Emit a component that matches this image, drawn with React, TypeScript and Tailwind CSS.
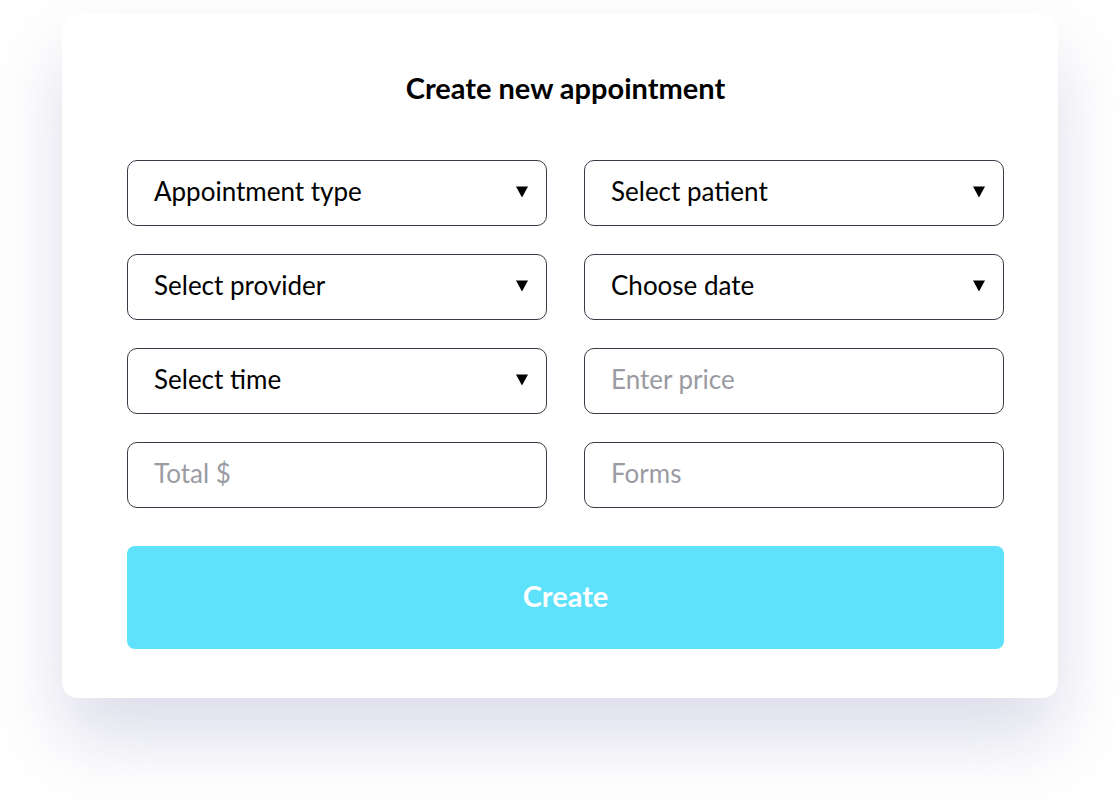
import React from "react";

const selects = [
  "Appointment type",
  "Select patient",
  "Select provider",
  "Choose date",
  "Select time",
];

function Caret() {
  return (
    <svg width="12" height="12" viewBox="0 0 12 12" className="mb-[3px] shrink-0">
      <path d="M0 0.5h12L6 11.5z" fill="#000" />
    </svg>
  );
}

function SelectField({ label }: { label: string }) {
  return (
    <div className="flex h-[66px] items-center justify-between rounded-[10px] border border-[#3a3a48] bg-white pl-[26px] pr-[18px]">
      <span className="mb-[4px] text-[26px] leading-[30px] text-black">{label}</span>
      <Caret />
    </div>
  );
}

function InputField({ placeholder }: { placeholder: string }) {
  return (
    <input
      placeholder={placeholder}
      className="h-[66px] w-full rounded-[10px] border border-[#3a3a48] bg-white px-[26px] pb-[5px] text-[26px] text-black outline-none placeholder:text-[#9a9ba3]"
    />
  );
}

export default function App() {
  return (
    <div
      className="min-h-screen w-full bg-white pt-[14px]"
      style={{ fontFamily: "Lato, 'Noto Sans', sans-serif" }}
    >
      <div className="mx-[62px] w-[996px] rounded-[16px] bg-white pl-[65px] pr-[54px] pt-[57px] pb-[49px] shadow-[0_40px_70px_rgba(178,180,208,0.45)]">
        <h1 className="text-center text-[29px] font-bold leading-[34px] text-black">
          Create new appointment
        </h1>

        <div className="mt-[55px] grid grid-cols-2 gap-x-[37px] gap-y-[28px]">
          {selects.map((s) => (
            <SelectField key={s} label={s} />
          ))}
          <InputField placeholder="Enter price" />
          <InputField placeholder="Total $" />
          <InputField placeholder="Forms" />
        </div>

        <button className="mt-[38px] flex h-[103px] w-full items-center justify-center rounded-[8px] bg-[#5ee1fa] pb-[3px] text-[29px] font-bold text-white">
          Create
        </button>
      </div>
    </div>
  );
}
